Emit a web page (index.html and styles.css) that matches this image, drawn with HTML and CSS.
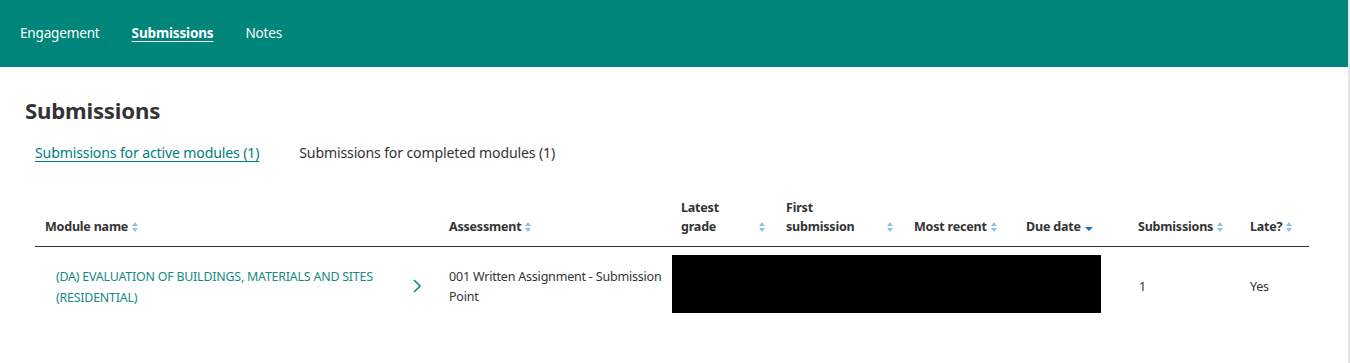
FILE: index.html
```html
<!DOCTYPE html>
<html lang="en">
<head>
<meta charset="utf-8">
<title>Submissions</title>
<link rel="stylesheet" href="styles.css">
</head>
<body>
<div class="page">
  <header class="topbar">
    <nav class="topnav">
      <a class="topnav-item" href="#">Engagement</a>
      <a class="topnav-item active" href="#">Submissions</a>
      <a class="topnav-item" href="#">Notes</a>
    </nav>
  </header>
  <main class="content">
    <h1 class="title">Submissions</h1>
    <div class="tabs">
      <a class="tab active" href="#">Submissions for active modules (1)</a>
      <a class="tab" href="#">Submissions for completed modules (1)</a>
    </div>
    <table class="grid">
      <colgroup>
        <col style="width:404px">
        <col style="width:232px">
        <col style="width:105px">
        <col style="width:128px">
        <col style="width:112px">
        <col style="width:112px">
        <col style="width:112px">
        <col style="width:69px">
      </colgroup>
      <thead>
        <tr>
          <th><div class="th"><span>Module name</span><i class="sort"></i></div></th>
          <th><div class="th"><span>Assessment</span><i class="sort"></i></div></th>
          <th><div class="th fill"><span>Latest<br>grade</span><i class="sort"></i></div></th>
          <th><div class="th fill"><span>First<br>submission</span><i class="sort"></i></div></th>
          <th><div class="th"><span>Most recent</span><i class="sort"></i></div></th>
          <th><div class="th"><span>Due date</span><i class="sort-down"></i></div></th>
          <th><div class="th"><span>Submissions</span><i class="sort"></i></div></th>
          <th><div class="th"><span>Late?</span><i class="sort"></i></div></th>
        </tr>
      </thead>
      <tbody>
        <tr>
          <td class="module">
            <a class="module-link" href="#">
              <span class="module-name">(DA) EVALUATION OF BUILDINGS, MATERIALS AND SITES (RESIDENTIAL)</span>
              <svg class="chev" width="8" height="14" viewBox="0 0 8 14"><path d="M1 1 L7 7 L1 13" fill="none" stroke="#138a84" stroke-width="1.6"/></svg>
            </a>
          </td>
          <td class="assess"><span class="nowrap">001 Written Assignment - Submission</span> Point</td>
          <td class="redact-cell" colspan="4"><div class="redact"></div></td>
          <td class="num">1</td>
          <td class="late">Yes</td>
        </tr>
      </tbody>
    </table>
  </main>
</div>
</body>
</html>
```

FILE: styles.css
```css
* { box-sizing: border-box; }
html, body { margin: 0; padding: 0; background: #fff; }
body {
  font-family: "Noto Sans", "Open Sans", sans-serif;
  color: #333;
  font-size: 13px;
}
.page {
  width: 1348px;
  min-height: 363px;
  border-right: 2px solid #e6e6e6;
  box-sizing: content-box;
}
.topbar {
  background: #00857a;
  height: 67px;
  display: flex;
  align-items: center;
  padding: 0 0 2px 20px;
}
.topnav { display: flex; gap: 32px; }
.topnav-item {
  color: #fff;
  text-decoration: none;
  font-size: 13.5px;
  letter-spacing: -0.15px;
}
.topnav-item.active {
  font-weight: 700;
  text-decoration: underline;
  text-underline-offset: 3px;
}
.content { padding: 0 39px 0 35px; }
.title {
  margin: 30px 0 0 -10px;
  font-size: 22.2px;
  font-weight: 700;
  color: #333;
  letter-spacing: -0.2px;
  line-height: 28px;
}
.tabs {
  display: flex;
  gap: 40px;
  margin-top: 19px;
  font-size: 14.1px;
  letter-spacing: -0.15px;
  line-height: 18px;
}
.tab { color: #333; text-decoration: none; }
.tab.active {
  color: #00807a;
  text-decoration: underline;
  text-underline-offset: 3px;
}
.grid {
  margin-top: 36px;
  width: 1274px;
  border-collapse: collapse;
  table-layout: fixed;
}
.grid th {
  text-align: left;
  vertical-align: bottom;
  padding: 0 10px 10px 10px;
  border-bottom: 1.5px solid #333;
  font-size: 12.5px;
  font-weight: 700;
  color: #333;
  line-height: 19px;
  letter-spacing: -0.2px;
}
.th { display: flex; align-items: flex-end; gap: 4px; }
.th.fill span { flex: 1; }
.sort {
  display: inline-block;
  width: 7px;
  height: 10px;
  margin-bottom: 4px;
  position: relative;
  flex: none;
}
.sort::before, .sort::after {
  content: "";
  position: absolute;
  left: 0;
  border-left: 3.5px solid transparent;
  border-right: 3.5px solid transparent;
}
.sort::before { top: 0; border-bottom: 4px solid #8cc3ea; }
.sort::after { bottom: 0; border-top: 4px solid #8cc3ea; }
.sort-down {
  display: inline-block;
  flex: none;
  width: 0; height: 0;
  margin: 0 0 5px 0;
  border-left: 4px solid transparent;
  border-right: 4px solid transparent;
  border-top: 4px solid #1473c5;
}
.grid td {
  padding: 8px 10px 10px 10px;
  vertical-align: middle;
  font-size: 12.5px;
  line-height: 20px;
  color: #333;
  letter-spacing: -0.2px;
}
.grid td.module { padding: 11px 18px 8px 21px; }
.module-link {
  display: flex;
  align-items: center;
  justify-content: space-between;
  text-decoration: none;
  color: #138a84;
}
.module-name { font-size: 12.4px; line-height: 21px; width: 340px; }
.chev { flex: none; margin-top: -2px; }
.grid td.assess { padding: 11px 0 8px 10px; line-height: 19.5px; }
.nowrap { white-space: nowrap; }
.grid td.redact-cell { padding: 8px 27px 10px 1px; }
.redact { height: 58px; background: #000; }
.grid td.num { padding-left: 11px; }
.grid td.num, .grid td.late { padding-top: 13px; }
```
